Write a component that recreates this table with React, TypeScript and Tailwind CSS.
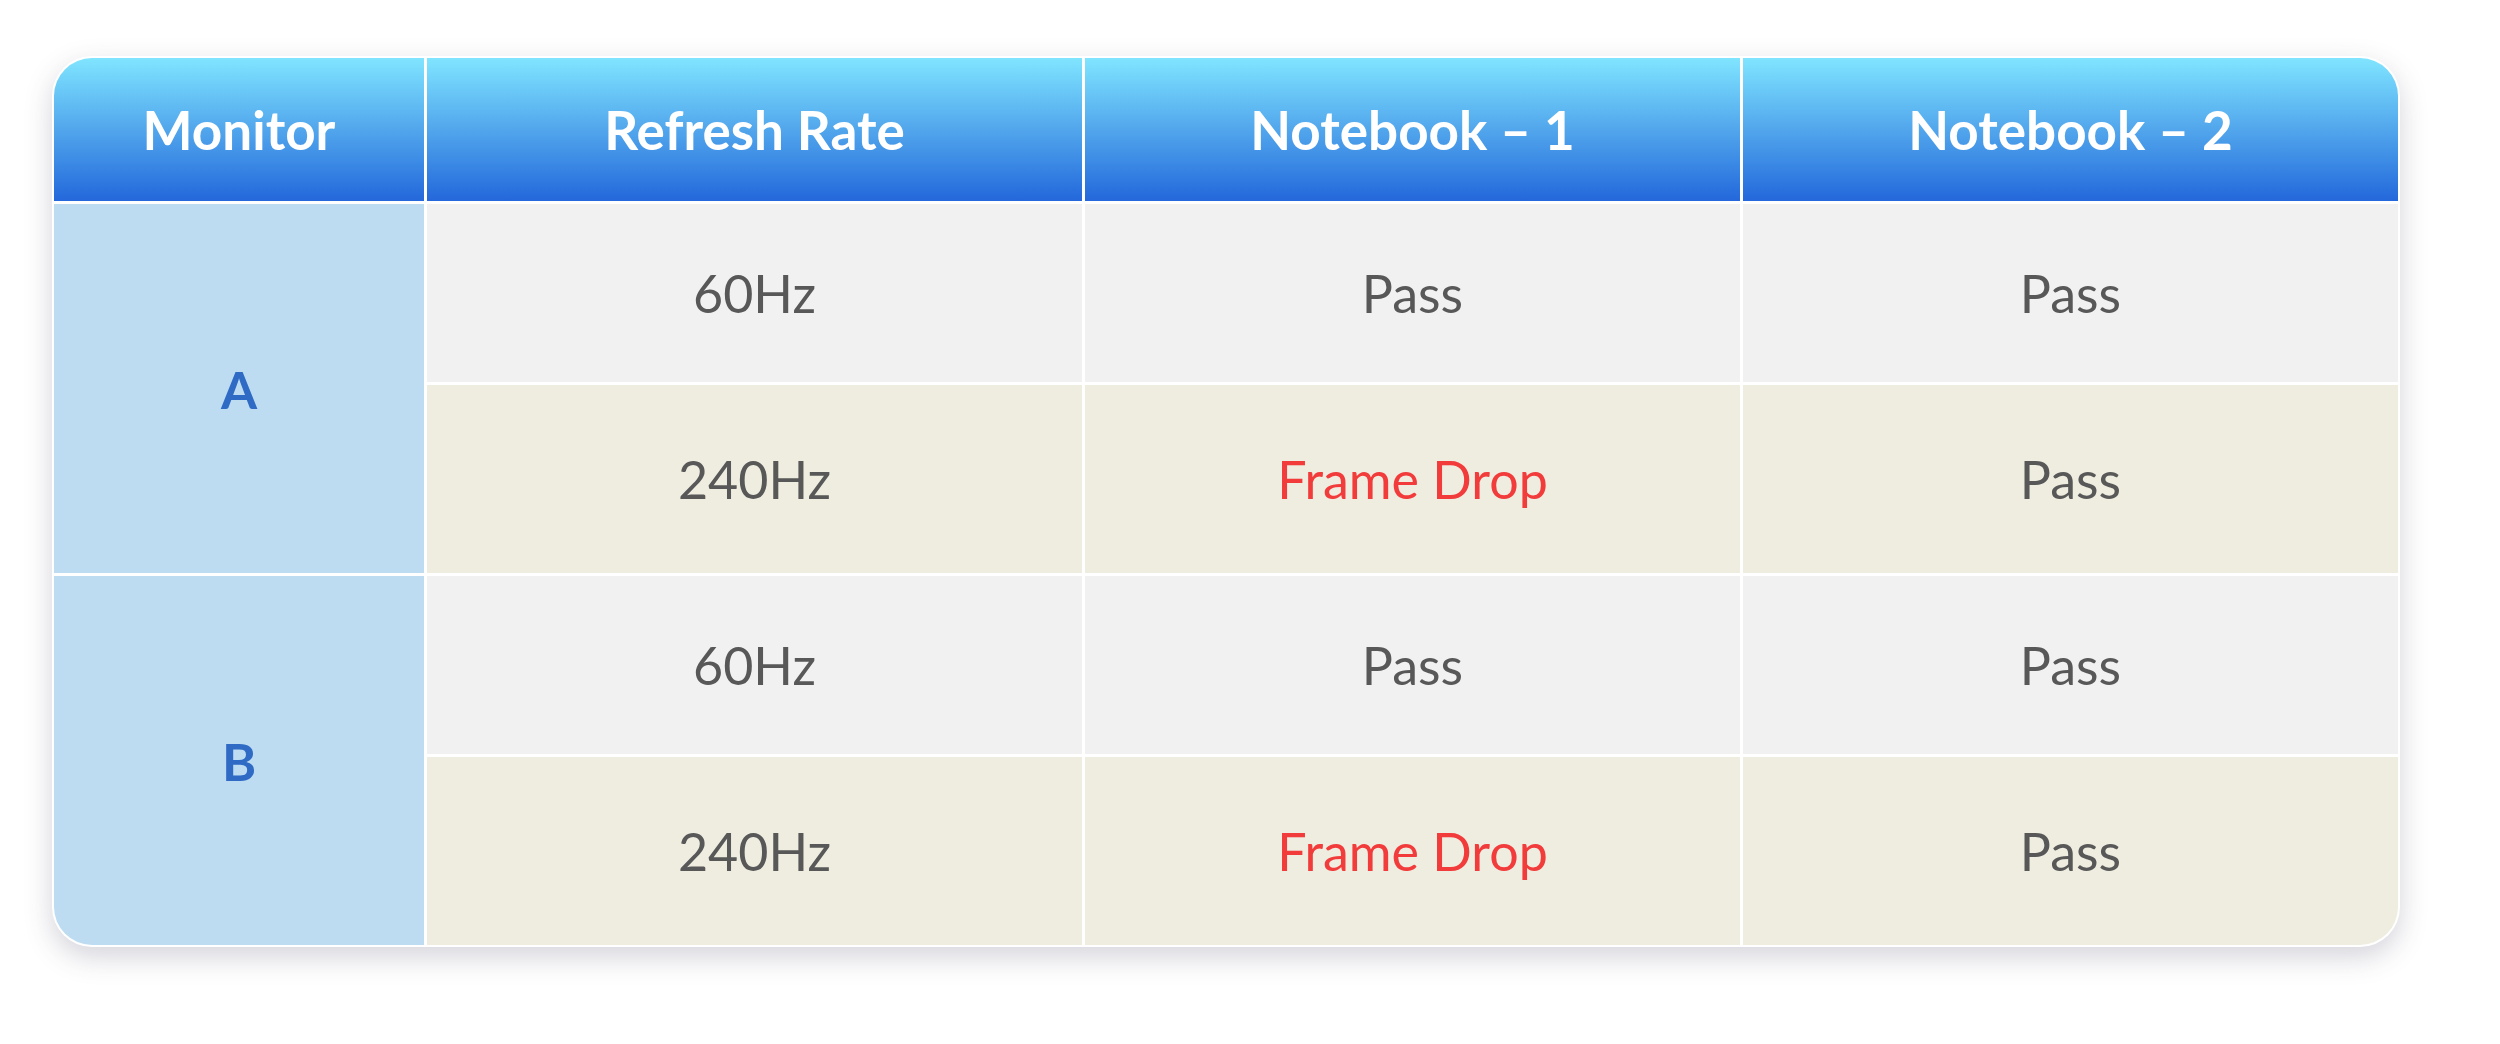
const HEADERS = ["Monitor", "Refresh Rate", "Notebook – 1", "Notebook – 2"];

type Row = { rate: string; nb1: string; nb2: string; tone: "gray" | "beige" };

const GROUPS: { monitor: string; rows: Row[] }[] = [
  {
    monitor: "A",
    rows: [
      { rate: "60Hz", nb1: "Pass", nb2: "Pass", tone: "gray" },
      { rate: "240Hz", nb1: "Frame Drop", nb2: "Pass", tone: "beige" },
    ],
  },
  {
    monitor: "B",
    rows: [
      { rate: "60Hz", nb1: "Pass", nb2: "Pass", tone: "gray" },
      { rate: "240Hz", nb1: "Frame Drop", nb2: "Pass", tone: "beige" },
    ],
  },
];

function Cell({ value, tone }: { value: string; tone: "gray" | "beige" }) {
  const bad = value === "Frame Drop";
  return (
    <div
      className={`flex items-center justify-center text-[52px] ${
        tone === "gray" ? "bg-[#f1f1f1]" : "bg-[#efede0]"
      } ${bad ? "text-[#f23b3b]" : "text-[#585858]"}`}
    >
      {value}
    </div>
  );
}

export default function App() {
  return (
    <div
      className="w-[2500px] h-[1044px] bg-white pt-[56px] pl-[52px]"
      style={{ fontFamily: "Lato, 'Noto Sans', sans-serif" }}
    >
      <div className="w-[2348px] h-[891px] rounded-[40px] bg-white p-[2px] shadow-[0_10px_28px_rgba(60,60,90,0.22)]">
        <div className="grid h-full grid-cols-[370px_655px_655px_655px] grid-rows-[143px_178px_188px_178px_188px] gap-[3px] overflow-hidden rounded-[38px]">
          {HEADERS.map((h) => (
            <div
              key={h}
              className="flex items-center justify-center bg-gradient-to-b from-[#80e5ff] via-[#52a6ec] to-[#2467db] text-[53px] font-bold text-white"
            >
              {h}
            </div>
          ))}

          {GROUPS.map((g) => [
            <div
              key={g.monitor}
              className="row-span-2 flex items-center justify-center bg-[#bddcf2] text-[52px] font-bold text-[#2f6bc4]"
            >
              {g.monitor}
            </div>,
            ...g.rows.flatMap((r, i) => [
              <Cell key={`${g.monitor}-${i}-a`} value={r.rate} tone={r.tone} />,
              <Cell key={`${g.monitor}-${i}-b`} value={r.nb1} tone={r.tone} />,
              <Cell key={`${g.monitor}-${i}-c`} value={r.nb2} tone={r.tone} />,
            ]),
          ])}
        </div>
      </div>
    </div>
  );
}
